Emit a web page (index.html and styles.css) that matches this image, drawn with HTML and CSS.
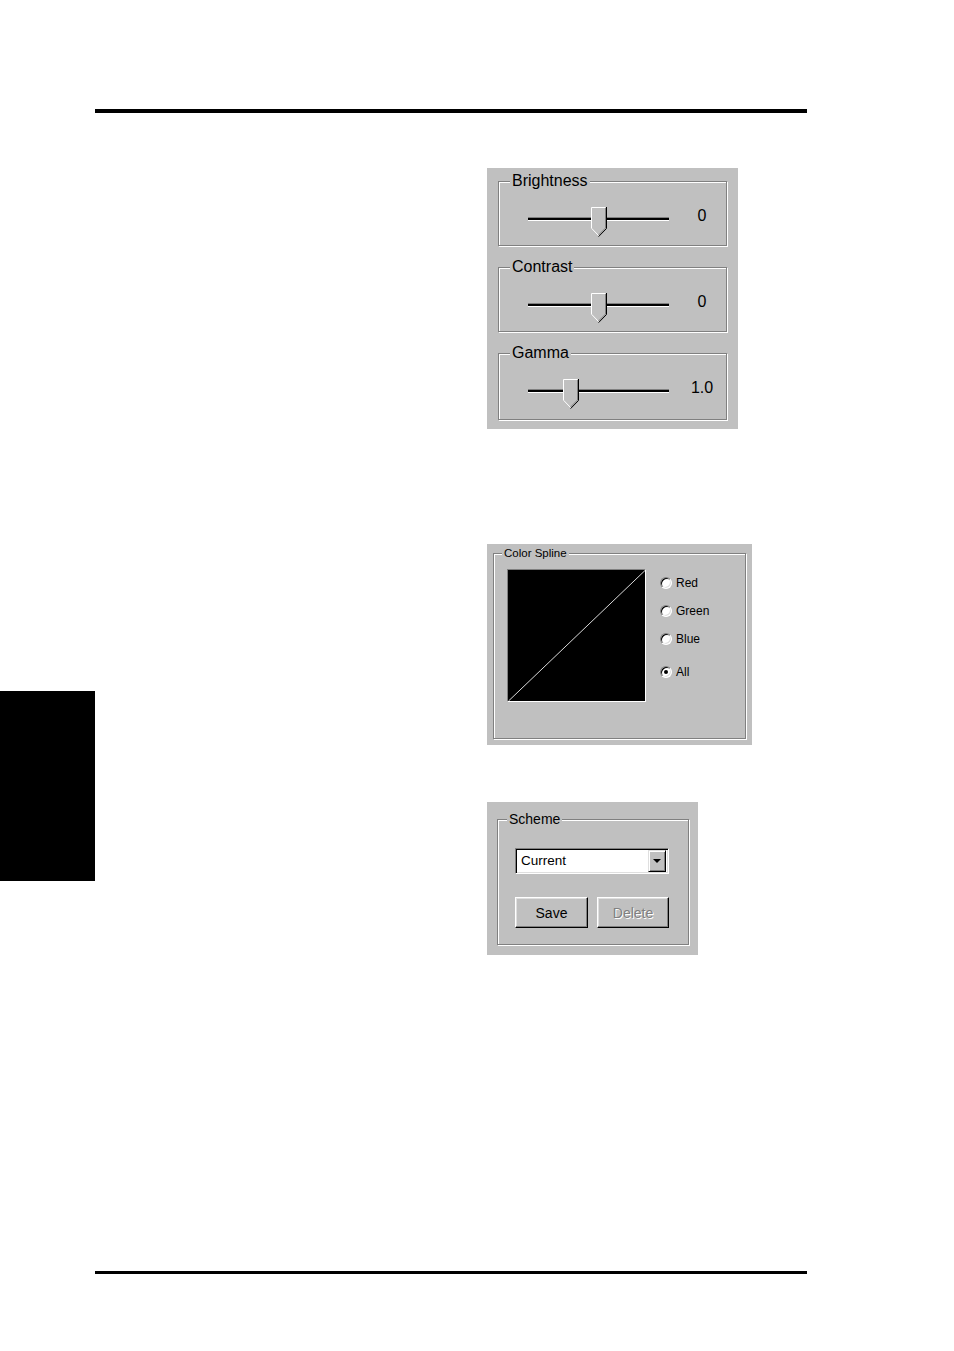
FILE: index.html
```html
<!DOCTYPE html>
<html>
<head>
<meta charset="utf-8">
<title>Color settings</title>
<link rel="stylesheet" href="styles.css">
</head>
<body>
<div class="page">
  <div class="rule rule-top"></div>
  <div class="main">
    <div class="tab"></div>
    <div class="col">
      <div class="panel panel-adjust">
        <div class="group g-adjust">
          <span class="legend legend-lg">Brightness</span>
          <div class="slider-row">
            <div class="slider">
              <div class="track"></div>
              <svg class="thumb" style="left:63px" width="16" height="30" viewBox="0 0 16 30"><polygon points="0,0 15,0 15,21 7.5,29 0,21" fill="#c0c0c0"/><path d="M0.5,21 V0.5 H14.5" stroke="#fff" fill="none"/><path d="M0.5,21.2 L7.5,28.5" stroke="#fff" fill="none"/><path d="M14.5,1 V21 L7.5,28" stroke="#808080" fill="none"/><path d="M15.5,0 V21.5 L7.6,29.6" stroke="#000" fill="none"/></svg>
            </div>
            <div class="value">0</div>
          </div>
        </div>
        <div class="group g-adjust">
          <span class="legend legend-lg">Contrast</span>
          <div class="slider-row">
            <div class="slider">
              <div class="track"></div>
              <svg class="thumb" style="left:63px" width="16" height="30" viewBox="0 0 16 30"><polygon points="0,0 15,0 15,21 7.5,29 0,21" fill="#c0c0c0"/><path d="M0.5,21 V0.5 H14.5" stroke="#fff" fill="none"/><path d="M0.5,21.2 L7.5,28.5" stroke="#fff" fill="none"/><path d="M14.5,1 V21 L7.5,28" stroke="#808080" fill="none"/><path d="M15.5,0 V21.5 L7.6,29.6" stroke="#000" fill="none"/></svg>
            </div>
            <div class="value">0</div>
          </div>
        </div>
        <div class="group g-adjust g-last">
          <span class="legend legend-lg">Gamma</span>
          <div class="slider-row">
            <div class="slider">
              <div class="track"></div>
              <svg class="thumb" style="left:35px" width="16" height="30" viewBox="0 0 16 30"><polygon points="0,0 15,0 15,21 7.5,29 0,21" fill="#c0c0c0"/><path d="M0.5,21 V0.5 H14.5" stroke="#fff" fill="none"/><path d="M0.5,21.2 L7.5,28.5" stroke="#fff" fill="none"/><path d="M14.5,1 V21 L7.5,28" stroke="#808080" fill="none"/><path d="M15.5,0 V21.5 L7.6,29.6" stroke="#000" fill="none"/></svg>
            </div>
            <div class="value">1.0</div>
          </div>
        </div>
      </div>

      <div class="panel panel-spline">
        <div class="group g-spline">
          <span class="legend legend-sm">Color Spline</span>
          <div class="spline-body">
            <div class="canvas">
              <svg width="137" height="131" viewBox="0 0 137 131"><line x1="0.5" y1="131" x2="137" y2="0.5" stroke="#d8d8d8" stroke-width="1"/></svg>
            </div>
            <div class="radios">
              <div class="radio"><span class="dot"></span><span class="rlabel">Red</span></div>
              <div class="radio"><span class="dot"></span><span class="rlabel">Green</span></div>
              <div class="radio"><span class="dot"></span><span class="rlabel">Blue</span></div>
              <div class="radio radio-all"><span class="dot checked"></span><span class="rlabel">All</span></div>
            </div>
          </div>
        </div>
      </div>

      <div class="panel panel-scheme">
        <div class="group g-scheme">
          <span class="legend legend-md">Scheme</span>
          <div class="combo">
            <span class="combo-text">Current</span>
            <span class="combo-btn"><span class="arrow"></span></span>
          </div>
          <div class="buttons">
            <div class="btn">Save</div>
            <div class="btn btn-disabled">Delete</div>
          </div>
        </div>
      </div>
    </div>
  </div>
  <div class="rule rule-bottom"></div>
</div>
</body>
</html>
```

FILE: styles.css
```css
html, body {
  margin: 0;
  padding: 0;
  background: #fff;
}
body {
  font-family: "Liberation Sans", Arial, sans-serif;
  color: #000;
}
.page {
  width: 954px;
  height: 1351px;
  padding-top: 109px;
  box-sizing: border-box;
}
.rule {
  margin-left: 95px;
  width: 712px;
  background: #000;
}
.rule-top { height: 4px; }
.rule-bottom { height: 3px; }
.main {
  display: flex;
  height: 1158px;
}
.tab {
  flex-shrink: 0;
  width: 95px;
  height: 190px;
  margin-top: 578px;
  background: #000;
}
.col {
  display: flex;
  flex-direction: column;
  align-items: flex-start;
  margin-left: 392px;
  padding-top: 55px;
}
.panel {
  background: #c0c0c0;
  box-sizing: border-box;
}
.group {
  position: relative;
  box-sizing: border-box;
  border: 1px solid #808080;
  box-shadow: 1px 1px 0 #fff, inset 1px 1px 0 #fff;
}
.legend {
  position: absolute;
  background: #c0c0c0;
  padding: 0 2px;
  white-space: nowrap;
}
.legend-lg {
  font-size: 16px;
  line-height: 18px;
  left: 11px;
  top: -10px;
}
.legend-sm {
  font-size: 11.5px;
  line-height: 14px;
  left: 8px;
  top: -8px;
}
.legend-md {
  font-size: 14px;
  line-height: 16px;
  left: 9px;
  top: -9px;
}

/* Panel 1 */
.panel-adjust {
  width: 251px;
  height: 261px;
  padding: 13px 0 0 11px;
}
.g-adjust {
  width: 229px;
  height: 65px;
  margin-bottom: 21px;
}
.g-last {
  height: 67px;
  margin-bottom: 0;
}
.slider-row {
  display: flex;
  align-items: flex-start;
  padding: 25px 0 0 29px;
}
.slider {
  position: relative;
  width: 141px;
  height: 30px;
  flex-shrink: 0;
}
.track {
  margin-top: 10px;
  height: 4px;
  box-sizing: border-box;
  border-top: 1px solid #808080;
  border-bottom: 1px solid #fff;
  background: #000;
}
.thumb {
  position: absolute;
  top: 0;
  display: block;
}
.value {
  width: 40px;
  margin-left: 13px;
  margin-top: 0;
  text-align: center;
  font-size: 16px;
  line-height: 18px;
}

/* Panel 2 */
.panel-spline {
  margin-top: 115px;
  width: 265px;
  height: 201px;
  padding: 9px 0 0 6px;
}
.g-spline {
  width: 253px;
  height: 186px;
}
.spline-body {
  display: flex;
  align-items: flex-start;
  padding: 15px 0 0 13px;
}
.canvas {
  width: 139px;
  height: 133px;
  box-sizing: border-box;
  border: 1px solid;
  border-color: #808080 #fff #fff #808080;
  background: #000;
}
.canvas svg { display: block; }
.radios {
  display: flex;
  flex-direction: column;
  gap: 12px;
  margin-left: 14px;
  padding-top: 6px;
}
.radio {
  display: flex;
  align-items: center;
  height: 16px;
  font-size: 12px;
}
.radio-all { margin-top: 5px; }
.dot {
  position: relative;
  width: 12px;
  height: 12px;
  box-sizing: border-box;
  border-radius: 50%;
  border: 1px solid;
  border-color: #808080 #fff #fff #808080;
  box-shadow: inset 1px 1px 0 #000, inset -1px -1px 0 #dfdfdf;
  background: #fff;
  flex-shrink: 0;
}
.dot.checked::after {
  content: "";
  position: absolute;
  left: 3px;
  top: 3px;
  width: 4px;
  height: 4px;
  border-radius: 50%;
  background: #000;
}
.rlabel {
  margin-left: 4px;
  line-height: 16px;
}

/* Panel 3 */
.panel-scheme {
  margin-top: 57px;
  width: 211px;
  height: 153px;
  padding: 17px 0 0 10px;
}
.g-scheme {
  width: 192px;
  height: 126px;
  padding: 28px 0 0 17px;
}
.combo {
  display: flex;
  align-items: center;
  justify-content: space-between;
  width: 154px;
  height: 26px;
  box-sizing: border-box;
  border: 1px solid;
  border-color: #808080 #fff #fff #808080;
  box-shadow: inset 1px 1px 0 #000, inset -1px -1px 0 #dfdfdf;
  background: #fff;
  padding: 2px 2px 2px 5px;
}
.combo-text {
  font-size: 13.5px;
  line-height: 16px;
}
.combo-btn {
  display: flex;
  align-items: center;
  justify-content: center;
  width: 18px;
  height: 22px;
  box-sizing: border-box;
  background: #c0c0c0;
  border: 1px solid;
  border-color: #dfdfdf #000 #000 #dfdfdf;
  box-shadow: inset 1px 1px 0 #fff, inset -1px -1px 0 #808080;
}
.arrow {
  width: 0;
  height: 0;
  border-left: 4px solid transparent;
  border-right: 4px solid transparent;
  border-top: 4px solid #000;
}
.buttons {
  display: flex;
  gap: 9px;
  margin-top: 23px;
}
.btn {
  width: 73px;
  height: 31px;
  box-sizing: border-box;
  display: flex;
  align-items: center;
  justify-content: center;
  font-size: 14px;
  border: 1px solid;
  border-color: #fff #000 #000 #fff;
  box-shadow: inset -1px -1px 0 #808080, inset 1px 1px 0 #dfdfdf;
  background: #c0c0c0;
}
.btn-disabled {
  width: 72px;
  color: #808080;
  text-shadow: 1px 1px 0 #fff;
}
```
